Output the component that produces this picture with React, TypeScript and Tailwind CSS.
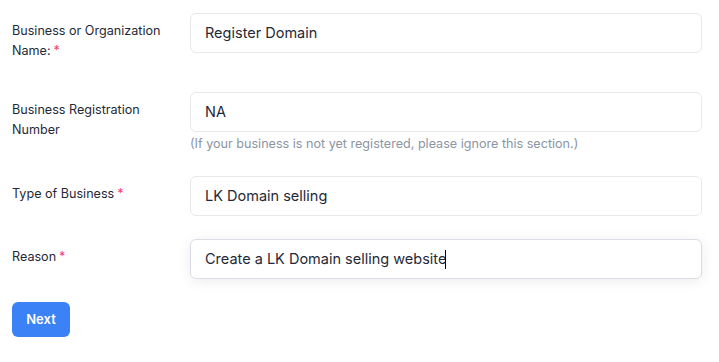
import React from "react";

const Req = () => <span className="text-[#f1416c] ml-[3px]">*</span>;

function Row({
  label,
  value,
  req,
  helper,
  focused,
  caret,
}: {
  label: React.ReactNode;
  value: string;
  req?: boolean;
  helper?: string;
  focused?: boolean;
  caret?: boolean;
}) {
  return (
    <div className="flex mb-[23px]">
      <div className="w-[178px] shrink-0 pt-2 pb-[9px] pr-4 text-[12.6px] leading-[19.5px] text-[#1f2937]">
        {label}
        {req && <Req />}
      </div>
      <div className="flex-1">
        <div
          className={
            "h-10 rounded-md border bg-white px-[14px] flex items-center text-[14.5px] text-[#1f2937] " +
            (focused
              ? "border-[#dadde3] shadow-[0_2px_14px_rgba(0,0,0,0.08)]"
              : "border-[#e6e8ec]")
          }
        >
          <span>{value}</span>
          {caret && <span className="inline-block w-px h-[19px] bg-black -ml-[1px]" />}
        </div>
        {helper && (
          <div className="mt-[3px] text-[12.6px] leading-[18px] text-[#8c95a3]">{helper}</div>
        )}
      </div>
    </div>
  );
}

export default function App() {
  return (
    <div
      className="w-[719px] h-[362px] bg-white pl-3 pr-[17px] pt-[13px]"
      style={{ fontFamily: "Inter, 'Noto Sans', sans-serif" }}
    >
      <Row
        label={
          <>
            Business or Organization
            <br />
            Name:
          </>
        }
        req
        value="Register Domain"
      />
      <Row
        label={
          <>
            Business Registration
            <br />
            Number
          </>
        }
        value="NA"
        helper="(If your business is not yet registered, please ignore this section.)"
      />
      <Row label="Type of Business" req value="LK Domain selling" />
      <Row label="Reason" req value="Create a LK Domain selling website" focused caret />
      <button className="h-[35px] w-[58px] rounded-md bg-[#3b82f6] text-white text-[13px] font-semibold">
        Next
      </button>
    </div>
  );
}
